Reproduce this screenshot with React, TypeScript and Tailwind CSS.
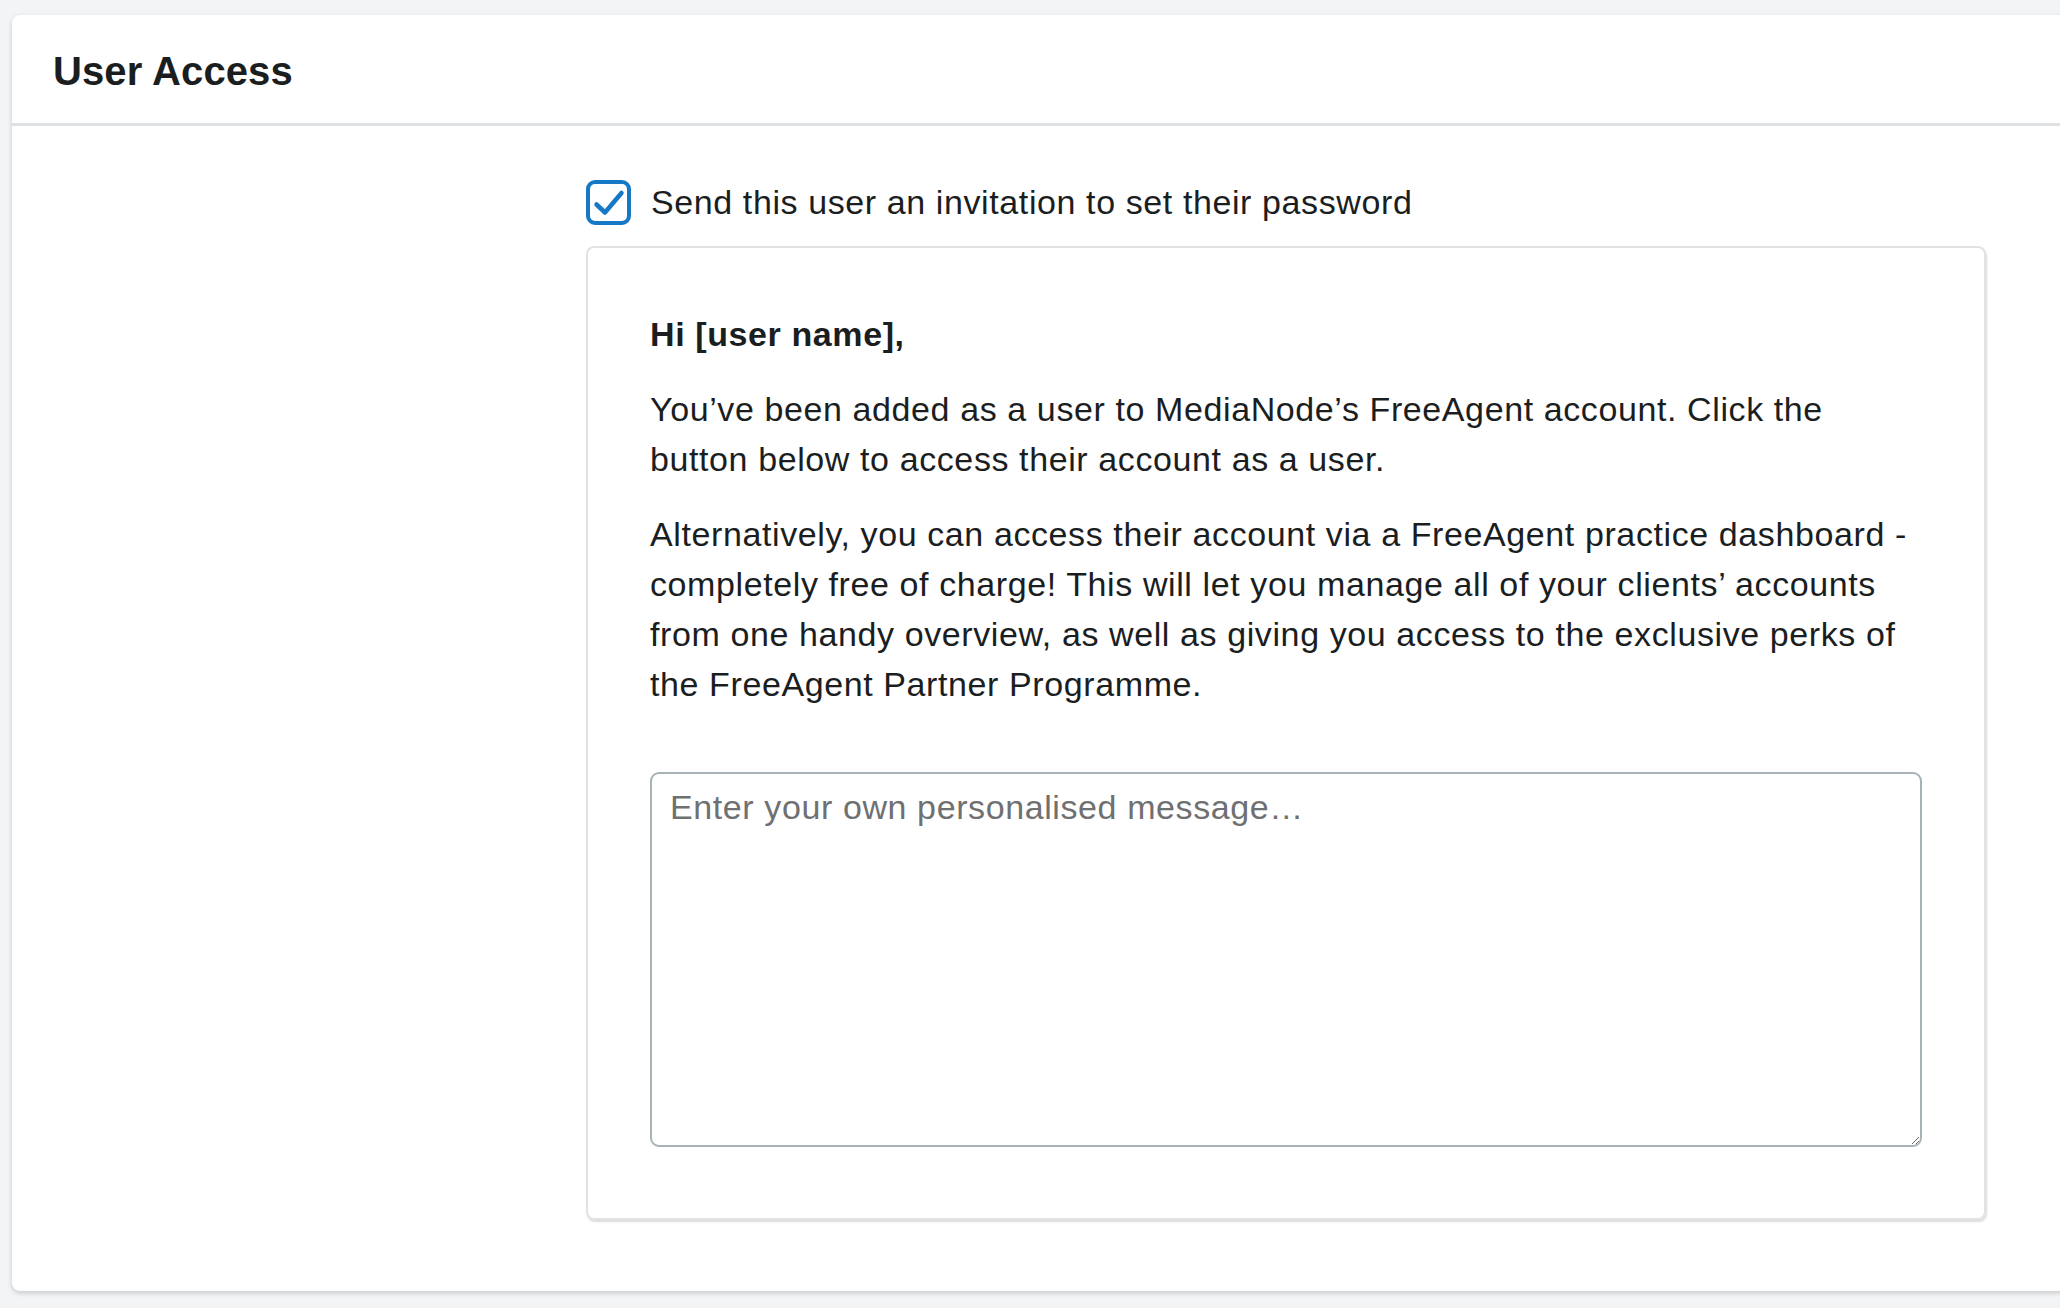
import React from "react";

export default function App() {
  return (
    <div
      className="w-[2060px] h-[1308px] overflow-hidden bg-[#f3f4f6] pt-[15px] pl-[12px] text-[#1b1e1f]"
      style={{ fontFamily: '"Liberation Sans", Arial, Helvetica, sans-serif' }}
    >
      <div className="w-[2080px] h-[1276px] bg-white rounded-[8px] shadow-[0_2px_5px_rgba(0,0,0,0.18)]">
        <div className="h-[111px] flex items-center pl-[41px] pt-[4px] border-b-[3px] border-[#dfe2e5]">
          <h1 className="text-[40px] font-bold leading-none tracking-[0.1px]">User Access</h1>
        </div>
        <div className="pl-[574px] pt-[54px]">
          <label className="flex items-center gap-[20px] h-[44px]">
            <span className="w-[45px] h-[45px] rounded-[9px] border-[4px] border-[#1679c6] bg-white relative">
              <svg className="absolute left-0 top-0" width="37" height="37" viewBox="0 0 37 37" fill="none">
                <path d="M6.5 20.5 L15 28.5 L31.5 9" stroke="#1679c6" strokeWidth="4.5" strokeLinecap="round" strokeLinejoin="round" />
              </svg>
            </span>
            <span className="text-[34px] leading-[50px] tracking-[0.6px]">Send this user an invitation to set their password</span>
          </label>
          <div className="mt-[22px] w-[1400px] rounded-[8px] border-2 border-[#e2e2e2] shadow-[1px_2px_2px_rgba(0,0,0,0.14)] px-[62px] pt-[61px] pb-[71px] text-[34px] leading-[50px] tracking-[0.6px]">
            <p className="font-bold mb-[25px]">Hi [user name],</p>
            <p className="mb-[25px]">
              You’ve been added as a user to MediaNode’s FreeAgent account. Click the button below to access their account as a user.
            </p>
            <p className="mb-[63px]">
              Alternatively, you can access their account via a FreeAgent practice dashboard - completely free of charge! This will let you manage all of your clients’ accounts from one handy overview, as well as giving you access to the exclusive perks of the FreeAgent Partner Programme.
            </p>
            <textarea
              className="block w-full h-[375px] rounded-[9px] border-2 border-[#a7b3b7] px-[18px] pt-[8px] text-[34px] leading-[50px] tracking-[0.6px] placeholder:text-[#6f7071] outline-none"
              style={{ fontFamily: '"Liberation Sans", Arial, Helvetica, sans-serif' }}
              placeholder="Enter your own personalised message…"
            />
          </div>
        </div>
      </div>
    </div>
  );
}
